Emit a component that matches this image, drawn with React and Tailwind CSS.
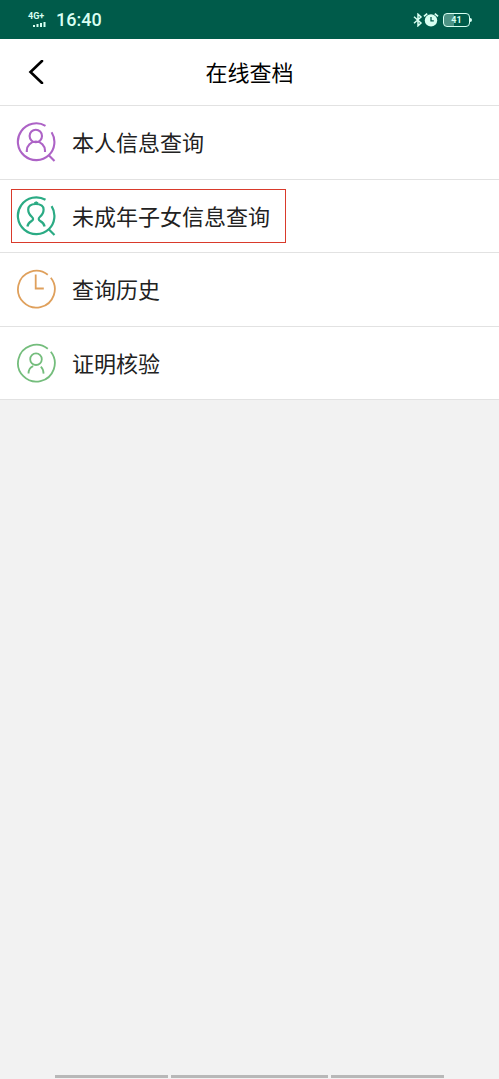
import React from "react";

// --- Row icons ---
// All four share the same open ring, the inner drawing changes.
const RingIcon = ({ className = "", strokeWidth = 1.8, handle = false, ring, children }) => (
  <svg
    viewBox="0 0 40 40"
    fill="none"
    stroke="currentColor"
    strokeWidth={strokeWidth}
    className={`size-10 shrink-0 ${className}`}
    aria-hidden="true"
  >
    <path d={ring} />
    {handle && <path d="M32.5 33 38.5 39" />}
    {children}
  </svg>
);

const SEARCH_RING = "M29.5 3.8A18.4 18.4 0 1 0 33 33A18.4 18.4 0 0 0 35.6 10.2";
const FULL_RING = "M31.8 5.8A18.4 18.4 0 1 0 34.8 8.8";

const PersonSearchIcon = () => (
  <RingIcon className="text-[#ad63c6]" strokeWidth={2.1} ring={SEARCH_RING} handle>
    <circle cx="19.8" cy="14" r="6.2" />
    <path d="M10.8 30V28.6A9.1 9.1 0 0 1 29 28.6V30" />
  </RingIcon>
);

const ChildSearchIcon = () => (
  <RingIcon className="text-[#2bab84]" strokeWidth={2.2} ring={SEARCH_RING} handle>
    <path d="M11.4 30.5C11.8 27.6 13.2 26.4 15.6 25C17.4 23.9 17.6 22.4 16 21C13.4 18.8 12.2 16.5 12.2 13.6C12.2 10 15 8 19.8 8C24.6 8 27.6 10 27.6 13.6C27.6 16.5 26.4 18.8 23.8 21C22.2 22.4 22.4 23.9 24.2 25C26.6 26.4 28.2 27.6 28.6 30.5" />
    <path d="M18.4 7.4 20.2 6.4 22 7.4" />
  </RingIcon>
);

const HistoryIcon = () => (
  <RingIcon className="text-[#dfa05c]" ring={FULL_RING}>
    <path d="M19.7 5.5V19.5H27.8" />
  </RingIcon>
);

const VerifyIcon = () => (
  <RingIcon className="text-[#74bd7c]" ring={FULL_RING}>
    <circle cx="20" cy="16.2" r="5.8" />
    <path d="M12.5 30.6C12.6 27 14.2 24.2 17.2 23.2M24.8 23.6C26.5 25.2 27.5 27.5 27.6 30.6" />
  </RingIcon>
);

const items = [
  { label: "本人信息查询", Icon: PersonSearchIcon },
  { label: "未成年子女信息查询", Icon: ChildSearchIcon, highlighted: true },
  { label: "查询历史", Icon: HistoryIcon },
  { label: "证明核验", Icon: VerifyIcon },
];

// --- Phone status bar ---
const StatusBar = () => (
  <div className="flex h-[39px] items-center justify-between bg-[#005b4a] pr-[27px] pl-7 font-['Roboto',sans-serif] text-[#d8fff2]">
    <div className="flex items-center gap-2">
      <div className="flex w-5 flex-col items-end">
        <span className="w-full text-[9px] leading-[9px] font-bold">4G+</span>
        <svg viewBox="0 0 14 7" className="mr-0.5 h-[7px] w-[14px]" fill="currentColor" aria-hidden="true">
          <path d="M1 4h2v2H1zM4.5 3h2v3h-2zM8 2h2v4H8zM11.5 1h2v5h-2z" />
        </svg>
      </div>
      <span className="text-lg leading-5 font-medium">16:40</span>
    </div>
    <div className="flex items-center">
      <svg viewBox="0 0 10 14" className="h-[14px] w-[10px]" fill="none" stroke="currentColor" strokeWidth="1.5" aria-hidden="true">
        <path d="M1 3.8 8 10 5 12.8V1.2L8 4 1 10.2" />
      </svg>
      <svg viewBox="0 0 16 16" className="size-4" aria-hidden="true">
        <circle cx="8" cy="8.4" r="6.2" fill="currentColor" />
        <path d="M1 4.4 4.2 1.6M11.8 1.6 15 4.4" stroke="currentColor" strokeWidth="1.8" />
        <path d="M8 5V8.8H10.8" fill="none" stroke="#005b4a" strokeWidth="1.3" />
      </svg>
      <div className="ml-1 flex h-[14px] w-[27px] items-center justify-center rounded-sm border border-current bg-linear-to-r from-[#4e9385] from-40% to-transparent to-40% pt-px text-[9px] leading-3 font-bold">
        41
      </div>
      <div className="h-1 w-0.5 rounded-r-sm bg-current" />
    </div>
  </div>
);

export default function App() {
  return (
    <div className="flex min-h-screen flex-col bg-[#f2f2f2] font-['Noto_Sans_CJK_SC',sans-serif] text-[22px] leading-8 text-[#222222]">
      <StatusBar />

      <header className="grid h-[67px] grid-cols-[1fr_auto_1fr] items-center border-b border-[#e2e2e2] bg-white">
        <button type="button" aria-label="返回" className="ml-6 flex size-6 items-center justify-center text-black">
          <svg viewBox="0 0 24 24" className="size-6" fill="none" stroke="currentColor" strokeWidth="2.6" strokeLinecap="round" aria-hidden="true">
            <path d="M18 1 6.5 12 18 23" />
          </svg>
        </button>
        <h1 className="pb-0.5 text-black">在线查档</h1>
      </header>

      {/* Menu */}
      <nav>
        <ul className="flex min-h-[294px] flex-col bg-white">
          {items.map(({ label, Icon, highlighted }) => (
            <li key={label} className="flex flex-1 border-b border-[#e2e2e2]">
              <a href="#" className="flex flex-1 items-center pl-[11px]">
                <span
                  className={`flex h-[54px] items-center gap-4 border pr-[15px] pl-1 ${
                    highlighted ? "border-[#d93a2b]" : "border-transparent"
                  }`}
                >
                  <Icon />
                  <span className="pb-0.5">{label}</span>
                </span>
              </a>
            </li>
          ))}
        </ul>
      </nav>

      {/* System navigation hints */}
      <div className="mx-auto mt-auto flex w-[78%] gap-[3px] pb-px">
        <div className="h-[3px] flex-[113] bg-[#b8b8b8]" />
        <div className="h-[3px] flex-[157] bg-[#b8b8b8]" />
        <div className="h-[3px] flex-[113] bg-[#b8b8b8]" />
      </div>
    </div>
  );
}
